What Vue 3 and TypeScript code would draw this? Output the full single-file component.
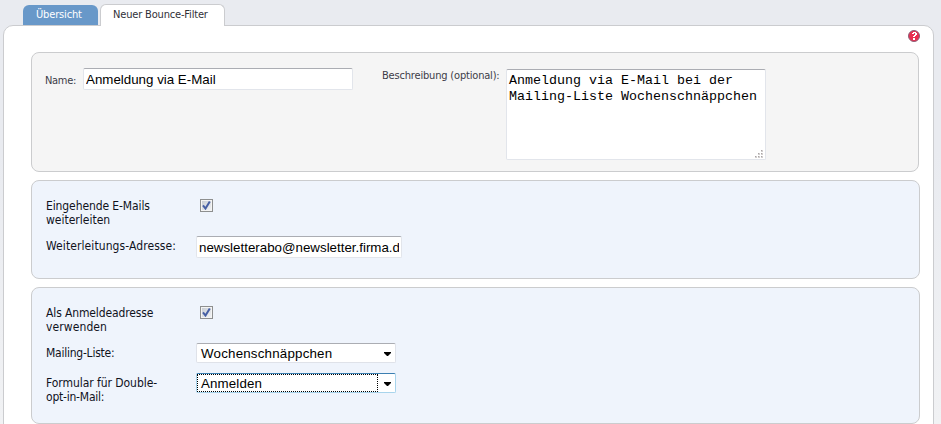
<script setup lang="ts">
import { ref } from 'vue'

const name = ref('Anmeldung via E-Mail')
const description = ref('Anmeldung via E-Mail bei der\nMailing-Liste Wochenschnäppchen')
const forward = ref(true)
const address = ref('newsletterabo@newsletter.firma.d')
const subscribe = ref(true)
const list = ref('Wochenschnäppchen')
const form = ref('Anmelden')
const gripDots: [number, number][] = [[6, 0], [3, 3], [6, 3], [0, 6], [3, 6], [6, 6]]
</script>

<template>
  <div class="page">
    <nav class="tabs">
      <a class="tab"><span class="t-over">Übersicht</span></a>
      <a class="tab active"><span class="t-new">Neuer Bounce-Filter</span></a>
    </nav>
    <main class="panel">
      <div class="help-row">
        <svg class="help" width="12" height="12" viewBox="0 0 12 12">
          <circle cx="6" cy="6" r="5.5" fill="#e92f50" stroke="#8b6078" />
          <path d="M4 3h1v-1h3v1h1v2h-1v1h-1v1h-2v-1h1v-1h1v-2h-1v1h-2zM5 8h2v2h-2z" fill="#fff" />
        </svg>
      </div>
      <section class="box head">
        <label class="small t-name">Name:</label>
        <input v-model="name" class="field name" type="text" />
        <label class="small desc">Beschreibung (optional):</label>
        <div class="area">
          <textarea v-model="description" class="field text" spellcheck="false"></textarea>
          <svg class="grip" width="8" height="8" viewBox="0 0 8 8" shape-rendering="crispEdges">
            <g v-for="(d, i) in gripDots" :key="i">
              <rect :x="d[0]" :y="d[1]" width="2" height="2" fill="#d2cfcf" />
              <rect :x="d[0]" :y="d[1]" width="1" height="1" fill="#aaa5a5" />
            </g>
          </svg>
        </div>
      </section>

      <section class="box blue forward">
        <div class="row two">
          <label class="label"><span class="l1">Eingehende E-Mails</span><br /><span class="l2">weiterleiten</span></label>
          <button class="check" type="button" @click="forward = !forward">
            <svg v-if="forward" width="13" height="13" viewBox="0 0 13 13">
              <path d="M3 6.4L5.5 9.6L9.8 2.6" fill="none" stroke="#465fa4" stroke-width="2" />
            </svg>
          </button>
        </div>
        <div class="row">
          <label class="label"><span class="l3">Weiterleitungs-Adresse:</span></label>
          <input v-model="address" class="field address" type="text" />
        </div>
      </section>

      <section class="box blue subscribe">
        <div class="row two">
          <label class="label"><span class="l4">Als Anmeldeadresse</span><br /><span class="l5">verwenden</span></label>
          <button class="check" type="button" @click="subscribe = !subscribe">
            <svg v-if="subscribe" width="13" height="13" viewBox="0 0 13 13">
              <path d="M3 6.4L5.5 9.6L9.8 2.6" fill="none" stroke="#465fa4" stroke-width="2" />
            </svg>
          </button>
        </div>
        <div class="row list">
          <label class="label"><span class="l6">Mailing-Liste:</span></label>
          <div class="select">
            <span class="value v1">{{ list }}</span>
            <svg class="arrow" width="7" height="4" viewBox="0 0 7 4"><path d="M0 0h7v1l-3 3h-1l-3-3z" /></svg>
          </div>
        </div>
        <div class="row form">
          <label class="label"><span class="l7">Formular für Double-</span><br /><span class="l8">opt-in-Mail:</span></label>
          <div class="select focused">
            <span class="value v2">{{ form }}</span>
            <svg class="arrow" width="7" height="4" viewBox="0 0 7 4"><path d="M0 0h7v1l-3 3h-1l-3-3z" /></svg>
          </div>
        </div>
      </section>
    </main>
  </div>
</template>

<style>
body { background: #e9ebf0; overflow: hidden; }
</style>

<style scoped>
* { box-sizing: border-box; }
.page {
  height: 424px;
  overflow: hidden;
  background: linear-gradient(#e9ebf0 0, #e9ebf0 150px, #f1f2f4 424px);
  font-family: "DejaVu Sans Condensed", "DejaVu Sans", sans-serif;
  font-stretch: condensed;
  color: #10121c;
}
.tabs { display: flex; align-items: flex-start; height: 26px; padding: 4px 0 0 23px; gap: 2px; position: relative; z-index: 1; }
.tab {
  width: 75px; height: 20px; margin-top: 1px; padding-left: 13px;
  border-radius: 6px 6px 0 0; background: #6898c9; color: #fff;
  font-size: 11px; line-height: 20px; white-space: nowrap;
}
.tab.active {
  width: 125px; height: 22px; margin: 0; padding-left: 12px;
  border: 1px solid #cbcccf; border-bottom: 0; background: #fff; color: #303038;
}
.t-over { letter-spacing: -0.15px; }
.t-new { letter-spacing: -0.17px; }
.panel {
  width: 931px; height: 430px; margin: -1px 0 0 3px; padding: 0 0 0 27px;
  border: 1px solid #cbcccf; border-radius: 10px 10px 0 0; background: #fff;
}
.help-row { height: 26px; padding: 4px 13px 0 0; display: flex; justify-content: flex-end; }
.box { border: 1px solid #cbccce; border-radius: 8px; }
.head {
  display: flex; align-items: flex-start; width: 888px; height: 120px;
  padding: 15px 0 0 13px; background: #f5f5f5;
}
.small { font-size: 11px; line-height: 16px; letter-spacing: -0.18px; color: #3c3c48; white-space: nowrap; flex: none; }
.t-name { width: 38px; padding-top: 5px; letter-spacing: -0.3px; }
.field {
  display: block; margin: 0; outline: 0; background: #fff; color: #000;
  border: 1px solid #e2e5eb; border-top-color: #abadb3; border-radius: 2px;
  font: 13.333px/16px "Liberation Sans", Arial, sans-serif;
}
.name { width: 270px; height: 22px; padding: 1px 2px; }
.desc { margin-left: 29px; width: 124px; }
.area { position: relative; margin-top: 1px; }
.text {
  width: 260px; height: 91px; padding: 3px 2px 2px; resize: none; overflow: hidden;
  font: 13.333px/16px "Liberation Mono", "Courier New", monospace;
}
.grip { position: absolute; right: 3px; bottom: 2px; }
.blue { width: 889px; background: #eff4fc; padding-left: 14px; font-size: 12px; line-height: 14px; }
.forward { height: 99px; margin-top: 8px; padding-top: 17px; }
.subscribe { height: 137px; margin-top: 8px; padding-top: 17px; }
.row { display: flex; align-items: flex-start; }
.row.two { height: 37px; }
.label { width: 150px; flex: none; white-space: nowrap; padding-top: 1px; }
.row:not(.two) .label { padding-top: 4px; }
.l1 { letter-spacing: -0.1px; }
.l3 { letter-spacing: 0.09px; }
.l4 { letter-spacing: -0.12px; }
.l5 { letter-spacing: 0.1px; }
.l6 { letter-spacing: -0.24px; }
.l7 { letter-spacing: -0.05px; }
.l8 { letter-spacing: -0.22px; }
.check {
  width: 13px; height: 13px; margin: 1px 0 0 4px; padding: 0; display: grid;
  border: 1px solid #8e8f8f; outline: 1px solid #f4f4f4; outline-offset: -2px;
  background: linear-gradient(135deg, #c4c9d1, #f5f6f7);
}
.check svg { margin: -1px; }
.address { width: 206px; height: 22px; padding: 1px 2px; margin-top: 1px; }
.list { height: 30px; }
.select {
  display: flex; align-items: stretch; width: 200px; height: 20px; margin-top: 1px; background: #fff;
  border: 1px solid #dfe2e9; border-top-color: #abadb3; border-radius: 2px;
  font: 13.333px/17px "Liberation Sans", Arial, sans-serif; color: #000;
}
.value { width: 181px; padding-left: 3px; border: 1px solid transparent; line-height: 17px; }
.v1 { letter-spacing: 0.2px; }
.v2 { letter-spacing: 0.12px; }
.focused { border-color: #a8d4ec; border-top-color: #3c7fb1; }
.focused .value { border: 1px dotted #000; }
.arrow { margin: 8px 0 0 6px; }
</style>
